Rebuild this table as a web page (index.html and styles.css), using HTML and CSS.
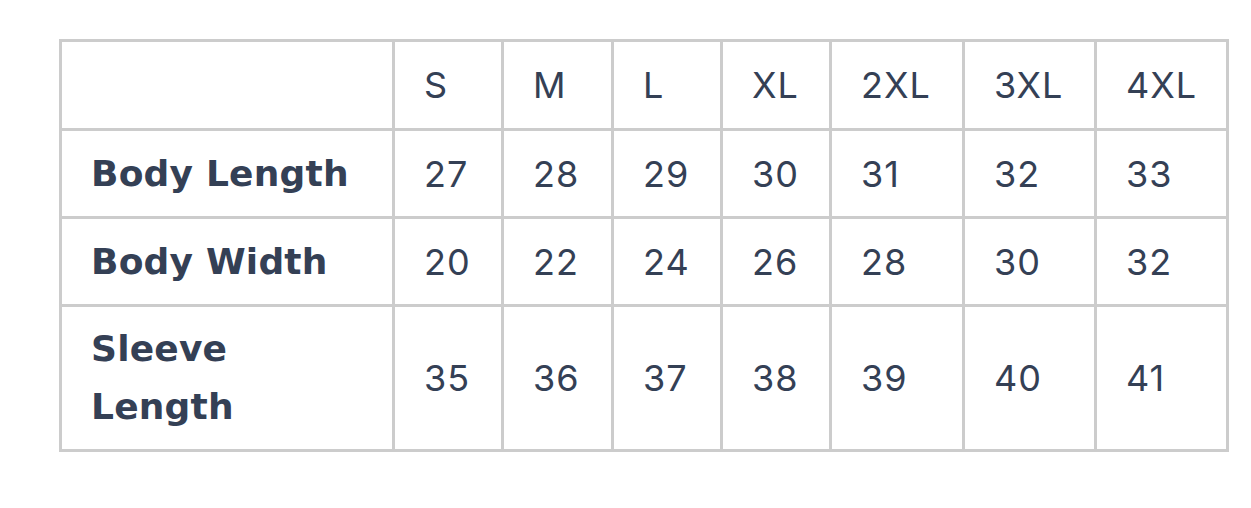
FILE: index.html
```html
<!DOCTYPE html>
<html lang="en">
<head>
<meta charset="utf-8">
<title>Size chart</title>
<link rel="stylesheet" href="styles.css">
</head>
<body>
<div class="page">
  <table class="size-table">
    <colgroup>
      <col class="c-label">
      <col class="c-s">
      <col class="c-m">
      <col class="c-l">
      <col class="c-xl">
      <col class="c-2xl">
      <col class="c-3xl">
      <col class="c-4xl">
    </colgroup>
    <tr class="r-head">
      <td></td>
      <td>S</td><td>M</td><td>L</td><td>XL</td><td>2XL</td><td>3XL</td><td>4XL</td>
    </tr>
    <tr class="r-mid">
      <th>Body Length</th>
      <td>27</td><td>28</td><td>29</td><td>30</td><td>31</td><td>32</td><td>33</td>
    </tr>
    <tr class="r-mid">
      <th>Body Width</th>
      <td>20</td><td>22</td><td>24</td><td>26</td><td>28</td><td>30</td><td>32</td>
    </tr>
    <tr class="r-tall">
      <th>Sleeve<br>Length</th>
      <td>35</td><td>36</td><td>37</td><td>38</td><td>39</td><td>40</td><td>41</td>
    </tr>
  </table>
</div>
</body>
</html>
```

FILE: styles.css
```css
html, body {
  margin: 0;
  padding: 0;
  background: #ffffff;
}

.page {
  padding: 39px 0 0 59px;
}

.size-table {
  table-layout: fixed;
  border-collapse: separate;
  border-spacing: 3px;
  background: #cccccc;
  width: 1170px;
  font-family: "Inter", "DejaVu Sans", sans-serif;
  color: #344055;
}

.c-label { width: 330px; }
.c-s { width: 106px; }
.c-m { width: 107px; }
.c-l { width: 106px; }
.c-xl { width: 106px; }
.c-2xl { width: 130px; }
.c-3xl { width: 129px; }
.c-4xl { width: 129px; }

.size-table td,
.size-table th {
  background: #ffffff;
  padding: 0 0 0 29px;
  text-align: left;
  vertical-align: middle;
  font-size: 36px;
  line-height: 58px;
  font-weight: 400;
  letter-spacing: 1px;
  white-space: nowrap;
}

.size-table th {
  font-family: "DejaVu Sans", sans-serif;
  font-weight: 700;
  font-size: 36px;
  letter-spacing: 0.2px;
}

.r-head td { height: 86px; }
.r-mid td, .r-mid th { height: 85px; }
.r-tall td, .r-tall th { height: 142px; }
```
